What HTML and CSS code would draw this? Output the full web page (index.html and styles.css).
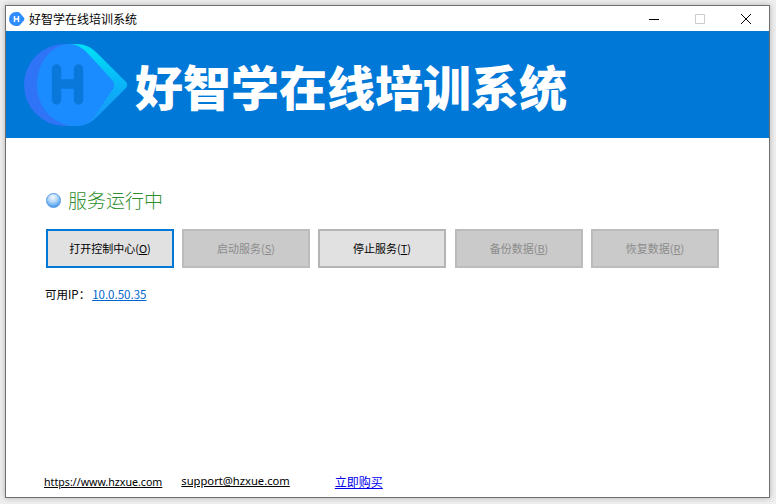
FILE: index.html
```html
<!DOCTYPE html>
<html lang="zh">
<head>
<meta charset="utf-8">
<title>好智学在线培训系统</title>
<link rel="stylesheet" href="styles.css">
</head>
<body>
<div class="window">
  <header class="titlebar">
    <svg class="app-icon" width="16" height="16" viewBox="0 0 16 16"><path d="M7 1h1.500c1 0 1.800.4 2.500 1l4 4.800c.5.700.5 1.700 0 2.400l-4 4.800c-.7.600-1.500 1-2.500 1H7A7 7 0 0 1 7 1z" fill="#2f8cff"/><path d="M5.500 5v6M9.500 5v6M5.500 8h4" stroke="#fff" stroke-width="1.500" fill="none"/></svg>
    <span class="title-text">好智学在线培训系统</span>
    <div class="controls">
      <span class="ctl"><svg width="10" height="10" viewBox="0 0 10 10"><path d="M0 5.500h10" stroke="#000" fill="none"/></svg></span>
      <span class="ctl"><svg width="10" height="10" viewBox="0 0 10 10"><path d="M.5.500h9v9h-9z" stroke="#ccc" fill="none"/></svg></span>
      <span class="ctl"><svg width="10" height="10" viewBox="0 0 10 10"><path d="M0 0l10 10M10 0L0 10" stroke="#000" fill="none"/></svg></span>
    </div>
  </header>
  <section class="banner">
    <svg class="logo" width="104" height="82" viewBox="0 0 104 82">
      <defs>
        <linearGradient id="tip" x1="0.5" y1="0" x2="0.5" y2="1"><stop offset="0" stop-color="#00e2f6"/><stop offset="0.5" stop-color="#0ab4f8"/><stop offset="1" stop-color="#1a90f8"/></linearGradient>
      </defs>
      <circle cx="41" cy="41" r="41" fill="#2f74f6"/>
      <path d="M44 0h8c8 0 15 3 21 9l29 29c1.500 1.500 1.500 4.500 0 6L73 73c-6 6-13 9-21 9h-8z" fill="url(#tip)"/>
      <path d="M46 0C28 0 13 18 13 41s17 41 39 41c8 0 14-4 20-12l17-25c1.500-2 1.500-6 0-8L68 14C60 5 54 0 46 0z" fill="#1b8cff"/>
      <path d="M32.500 25v31M54.500 25v31M32.500 40h22" stroke="#0a78da" stroke-width="9.500" stroke-linecap="round" fill="none"/>
    </svg>
    <h1 class="banner-title">好智学在线培训系统</h1>
  </section>
  <main class="content">
    <div class="status">
      <span class="orb"></span>
      <span class="status-text">服务运行中</span>
    </div>
    <div class="buttons">
      <button class="btn btn-focus">打开控制中心(<u>O</u>)</button>
      <button class="btn btn-off" disabled>启动服务(<u>S</u>)</button>
      <button class="btn">停止服务(<u>T</u>)</button>
      <button class="btn btn-off" disabled>备份数据(<u>B</u>)</button>
      <button class="btn btn-off" disabled>恢复数据(<u>R</u>)</button>
    </div>
    <p class="ip">可用IP：<a class="ip-link" href="#">10.0.50.35</a></p>
    <footer class="footer">
      <a class="foot-link foot-site" href="#">https://www.hzxue.com</a>
      <a class="foot-link foot-mail" href="#">support@hzxue.com</a>
      <a class="foot-buy" href="#">立即购买</a>
    </footer>
  </main>
</div>
</body>
</html>
```
FILE: styles.css
```css
* { box-sizing: border-box; }
html, body { height: 100%; }
body {
  margin: 0;
  padding: 5px 6px 6px 5px;
  background: #efefef;
  font-family: "Noto Sans CJK SC", sans-serif;
  overflow: hidden;
}
.window {
  height: 100%;
  display: flex;
  flex-direction: column;
  background: #fff;
  border: 1px solid #6e6e6e;
  box-shadow: 0 0 6px rgba(0, 0, 0, .25);
}
.titlebar {
  height: 25px;
  display: flex;
  align-items: center;
  padding-left: 3px;
  flex: none;
}
.app-icon { flex: none; }
.title-text {
  margin-left: 4px;
  font-size: 12px;
  color: #000;
}
.controls {
  margin-left: auto;
  display: flex;
}
.ctl {
  width: 46px;
  height: 25px;
  display: flex;
  align-items: center;
  justify-content: center;
}
.banner {
  height: 107px;
  flex: none;
  background: #0078d7;
  display: flex;
  align-items: center;
  padding-left: 18px;
}
.logo { flex: none; }
.banner-title {
  margin: 0 0 0 7px;
  font-size: 48px;
  font-weight: 900;
  line-height: 1;
  color: #fff;
}
.content {
  flex: 1;
  display: flex;
  flex-direction: column;
  padding: 50px 0 0 40px;
}
.status {
  display: flex;
  align-items: center;
  gap: 7px;
  height: 24px;
}
.orb {
  width: 15px;
  height: 15px;
  border-radius: 50%;
  border: 1px solid #4f97e6;
  background: radial-gradient(circle at 45% 25%, #f4faff 0, #bcdcf8 35%, #3f94f0 85%);
}
.status-text {
  font-size: 19px;
  line-height: 24px;
  font-weight: 300;
  color: #2f8f30;
}
.buttons {
  display: flex;
  margin-top: 17px;
  gap: 8px;
}
.btn {
  width: 128px;
  height: 39px;
  padding: 0 0 1px;
  font-family: inherit;
  font-size: 11px;
  color: #000;
  background: #e1e1e1;
  border: 2px solid #b4b4b4;
}
.btn:nth-child(3) { margin-right: 1px; }
.btn-focus { border-color: #0078d7; }
.btn-off {
  background: #cacaca;
  border-color: #bcbcbc;
  color: #8c8c8c;
}
.ip {
  margin: 18px 0 0 -1px;
  font-size: 11.500px;
  line-height: 16px;
  color: #000;
}
.ip-link { color: #0066cc; margin-left: 2px; }
.footer {
  margin: auto 0 0 -2px;
  height: 23px;
  display: flex;
  align-items: flex-start;
  font-size: 11px;
  line-height: 16px;
}
.foot-link { color: #000; font-family: "Noto Sans", sans-serif; }
.foot-site { font-size: 10.650px; }
.foot-mail { margin-left: 19px; font-size: 11.200px; position: relative; top: -1px; }
.foot-buy { margin-left: 45px; font-size: 12px; color: #0000ee; }
```
